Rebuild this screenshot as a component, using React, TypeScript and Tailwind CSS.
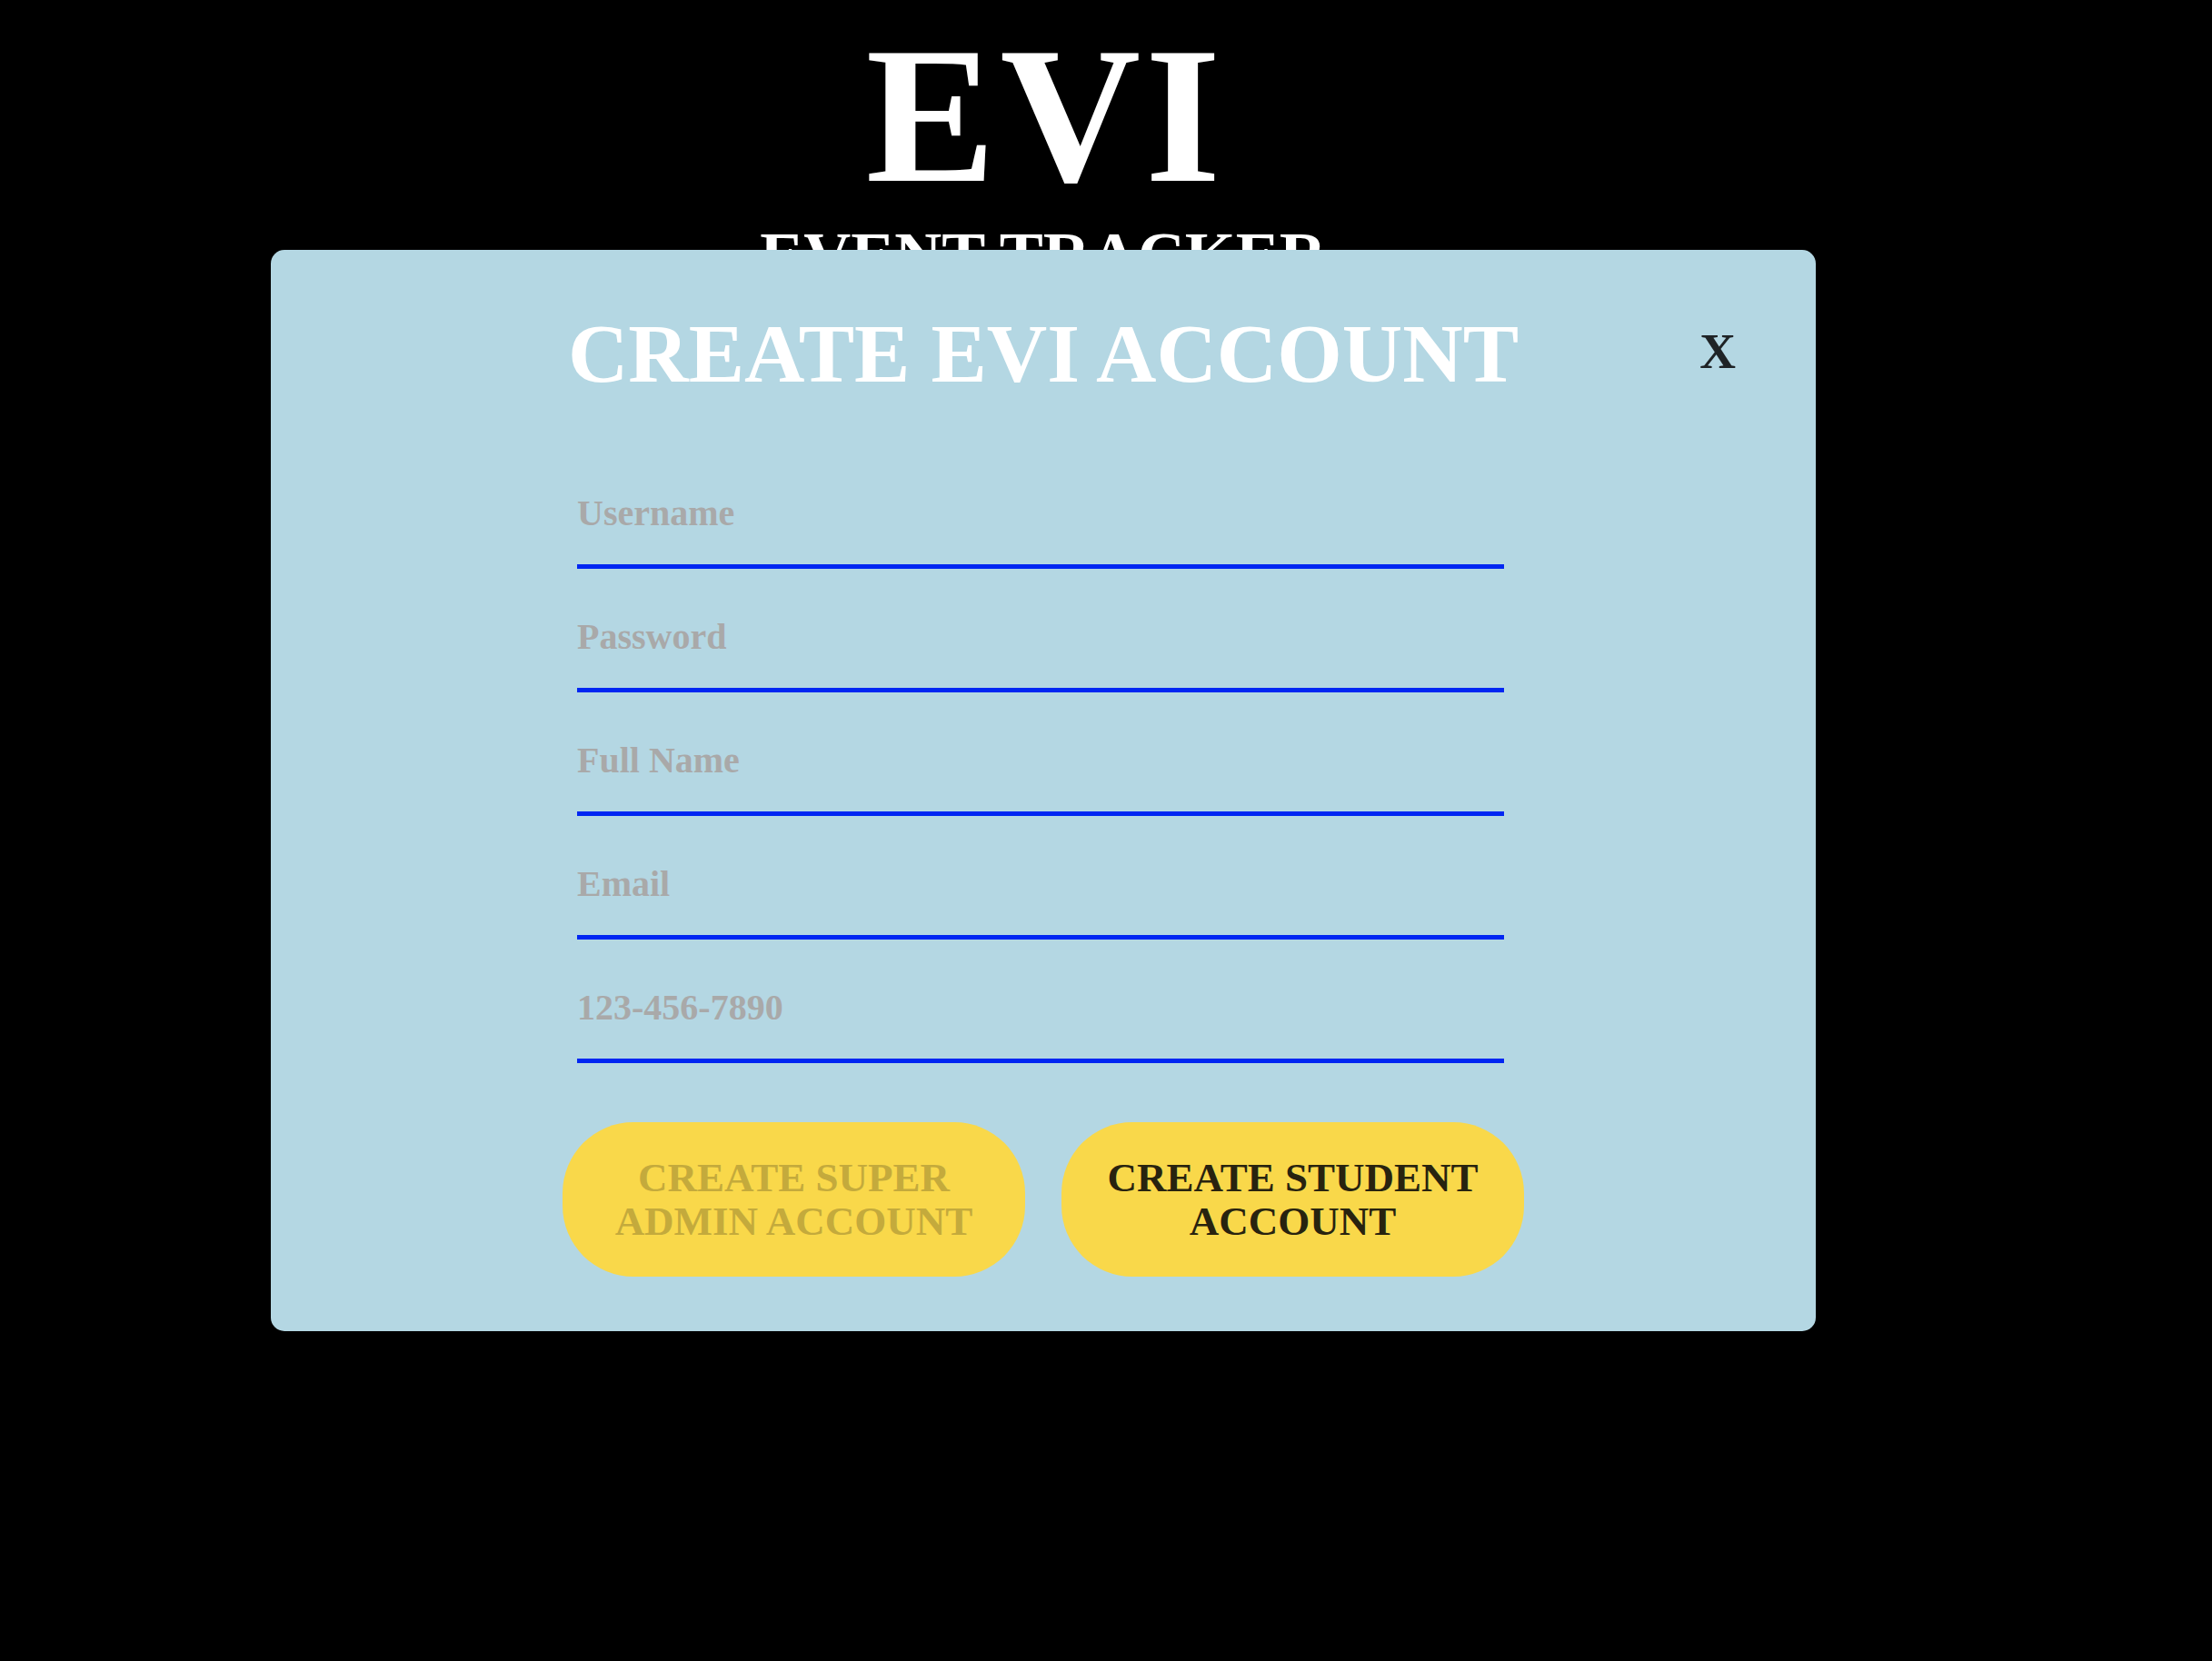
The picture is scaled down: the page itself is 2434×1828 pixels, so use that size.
import React from "react";

const fields = ["Username", "Password", "Full Name", "Email", "123-456-7890"];

export default function App() {
  return (
    <div className="relative min-h-[1828px] w-full bg-black font-['Liberation_Serif',serif] font-bold">
      <div className="flex w-[2296px] flex-col items-center pt-[20px] text-white">
        <h1 className="pl-[5px] text-[214px] leading-[214px] font-bold tracking-[5px]">EVI</h1>
        <h2 className="mt-[11px] text-[72px] leading-[72px] font-bold">EVENT TRACKER</h2>
      </div>

      <div className="absolute left-[298px] top-[275px] flex h-[1190px] w-[1700px] flex-col items-center rounded-[15px] bg-[#b4d7e3] pt-[64px]">
        <h3 className="text-[92px] leading-[100px] font-bold text-white">CREATE EVI ACCOUNT</h3>
        <button className="absolute right-[88px] top-[82px] text-[55px] leading-[60px] font-bold text-[#1f2326]">
          X
        </button>

        <div className="mt-[68px] mr-[6px] flex w-[1020px] flex-col gap-[17px]">
          {fields.map((f) => (
            <input
              key={f}
              type="text"
              placeholder={f}
              className="h-[119px] w-full border-b-[5px] border-[#0026f2] bg-transparent p-0 text-[40px] font-bold text-black outline-none placeholder:text-[#a9a9a9]"
            />
          ))}
        </div>

        <div className="mt-[65px] flex gap-[40px]">
          <button className="flex h-[170px] w-[509px] items-center justify-center rounded-[78px] bg-[#f9d84a] text-[45px] leading-[48px] font-bold text-[#c4aa3c]">
            CREATE SUPER
            <br />
            ADMIN ACCOUNT
          </button>
          <button className="flex h-[170px] w-[509px] items-center justify-center rounded-[78px] bg-[#f9d84a] text-[45px] leading-[48px] font-bold text-[#28230f]">
            CREATE STUDENT
            <br />
            ACCOUNT
          </button>
        </div>
      </div>
    </div>
  );
}
